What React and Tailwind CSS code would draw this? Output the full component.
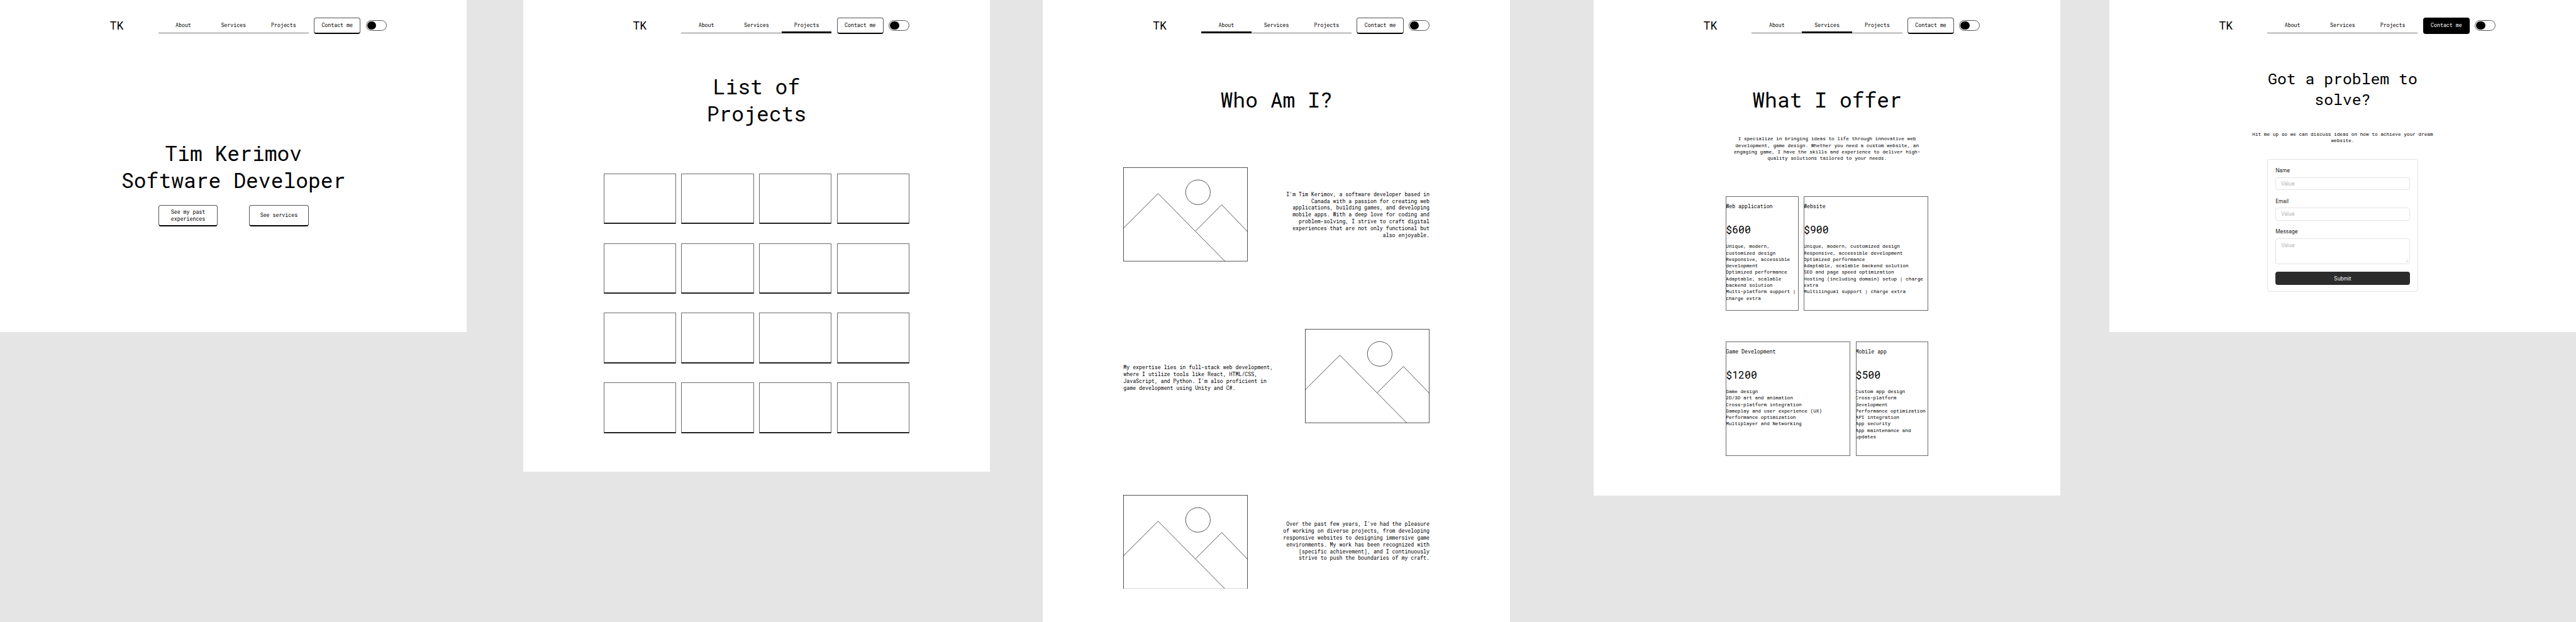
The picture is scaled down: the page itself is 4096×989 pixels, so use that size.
import React from "react";

const NAV = ["About", "Services", "Projects"];

function Header({ active }) {
  const contact = active === "Contact";
  return (
    <header className="flex h-50 w-944 items-center">
      <div className="w-224 text-center text-[18.56px] leading-[24.5px]">TK</div>
      <nav className="ml-16 flex h-50 w-464 items-start">
        {NAV.map((item) => (
          <a
            key={item}
            className={
              "flex h-48.5 w-1/3 items-center justify-center text-[8.25px] leading-[10.88px] " +
              (active === item ? "border-b-3 border-black pt-[3px]" : "border-b border-[#777] pt-[1px]")
            }
          >
            {item}
          </a>
        ))}
      </nav>
      <button
        className={
          "ml-16 flex h-50 w-144 items-center justify-center rounded-[4px] text-[8.25px] leading-[10.88px] " +
          (contact ? "bg-black text-white" : "border border-b-2 border-[#555] border-b-black pt-[1px]")
        }
      >
        Contact me
      </button>
      <div className="ml-16 flex h-33 w-64 items-center rounded-full border border-[#555] px-[1px]">
        <span className="h-26 w-28 rounded-full bg-black" />
      </div>
    </header>
  );
}

function Frame({ active, className, children }) {
  return (
    <section className={"flex w-1440 shrink-0 flex-col items-center bg-white pt-54 " + className}>
      <Header active={active} />
      {children}
    </section>
  );
}

function Title({ className, children }) {
  return (
    <h1 className={"whitespace-pre text-center text-[33px] leading-[43.5px] " + className}>{children}</h1>
  );
}

function HomeButton({ children }) {
  return (
    <button className="flex h-66.5 w-184 items-center justify-center whitespace-pre rounded-[4px] border border-b-2 border-[#555] border-b-black pt-[1px] text-center text-[8.25px] leading-[10.88px]">
      {children}
    </button>
  );
}

function Picture() {
  return (
    <svg viewBox="0 0 384 290" className="h-290 w-384 shrink-0" fill="none" stroke="#000" strokeWidth="1.3">
      <rect x="0.65" y="0.65" width="382.7" height="288.7" />
      <circle cx="230.5" cy="77" r="38" />
      <path d="M0 188.5 L107.6 81 L314 290" />
      <path d="M223 196.6 L303.7 115.7 L384 199" />
    </svg>
  );
}

function Story({ className, children }) {
  return <p className={"flex-1 whitespace-pre text-[8.25px] leading-[10.88px] " + className}>{children}</p>;
}

const OFFERS = [
  [
    {
      name: "Web application",
      price: "$600",
      width: "w-224",
      items:
        "Unique, modern,\ncustomized design\nResponsive, accessible\ndevelopment\nOptimized performance\nAdaptable, scalable\nbackend solution\nMulti-platform support |\ncharge extra",
    },
    {
      name: "Website",
      price: "$900",
      width: "w-384",
      items:
        "Unique, modern, customized design\nResponsive, accessible development\nOptimized performance\nAdaptable, scalable backend solution\nSEO and page speed optimization\nHosting (including domain) setup | charge\nextra\nMultilingual support | charge extra",
    },
  ],
  [
    {
      name: "Game Development",
      price: "$1200",
      width: "w-384",
      items:
        "Game design\n2D/3D art and animation\nCross-platform integration\nGameplay and user experience (UX)\nPerformance optimization\nMultiplayer and Networking",
    },
    {
      name: "Mobile app",
      price: "$500",
      width: "w-224",
      items:
        "Custom app design\nCross-platform\ndevelopment\nPerformance optimization\nAPI integration\nApp security\nApp maintenance and\nupdates",
    },
  ],
];

function Offer({ name, price, width, items }) {
  return (
    <article className={"h-353.5 pt-21 outline outline-[#6a6a6a] -outline-offset-1 " + width}>
      <h2 className="text-[8.25px] leading-[10.88px]">{name}</h2>
      <div className="mt-39.75 text-[16.5px] leading-[21.76px]">{price}</div>
      <div className="mt-20 whitespace-pre text-[7.734px] leading-[10.31px]">{items}</div>
    </article>
  );
}

function Field({ label, area }) {
  return (
    <label className="flex flex-col">
      <span className="text-[8.25px] leading-[11.55px] text-[#1e1e1e]">{label}</span>
      <span
        className={
          "mt-8 flex justify-between rounded-[4px] border border-[#e4e4e4] pl-15 text-[8.25px] text-[#b3b3b3] " +
          (area ? "h-80 pt-12 leading-[8.25px]" : "h-40 items-center leading-[8.25px]")
        }
      >
        Value
        {area && (
          <svg viewBox="0 0 8 8" className="mr-4 mb-4 h-8 w-8 self-end" stroke="#999" strokeWidth="1">
            <path d="M1 7.5 L7.5 1 M4.5 7.5 L7.5 4.5" />
          </svg>
        )}
      </span>
    </label>
  );
}

export default function App() {
  return (
    <main className="flex h-[989px] w-[4096px] items-start overflow-hidden bg-[#e5e5e5] font-['Roboto_Mono','DejaVu_Sans_Mono',monospace] text-black [--spacing:0.51561px]">
      <Frame active="" className="h-1024">
        <Title className="mt-326">{"Tim Kerimov\nSoftware Developer"}</Title>
        <div className="mt-33 flex gap-96">
          <HomeButton>{"See my past\nexperiences"}</HomeButton>
          <HomeButton>See services</HomeButton>
        </div>
      </Frame>

      <Frame active="Projects" className="ml-173 h-1455">
        <Title className="mt-120.5">{"List of\nProjects"}</Title>
        <div className="mt-141.5 grid grid-cols-4 gap-x-16 gap-y-59">
          {Array.from({ length: 16 }, (_, i) => (
            <div key={i} className="h-156 w-224 rounded-[1px] border border-b-2 border-[#6a6a6a] border-b-[#222]" />
          ))}
        </div>
      </Frame>

      <Frame active="About" className="ml-163.5 h-1919">
        <Title className="mt-162.25">Who Am I?</Title>
        <div className="mt-165.5 flex h-290 w-944">
          <Picture />
          <Story className="pt-73 text-right">
            {
              "I'm Tim Kerimov, a software developer based in\nCanada with a passion for creating web\napplications, building games, and developing\nmobile apps. With a deep love for coding and\nproblem-solving, I strive to craft digital\nexperiences that are not only functional but\nalso enjoyable."
            }
          </Story>
        </div>
        <div className="mt-209 flex h-290 w-944">
          <Story className="pt-108">
            {
              "My expertise lies in full-stack web development,\nwhere I utilize tools like React, HTML/CSS,\nJavaScript, and Python. I'm also proficient in\ngame development using Unity and C#."
            }
          </Story>
          <Picture />
        </div>
        <div className="mt-221 flex h-290 w-944">
          <Picture />
          <Story className="pt-80 text-right">
            {
              "Over the past few years, I've had the pleasure\nof working on diverse projects, from developing\nresponsive websites to designing immersive game\nenvironments. My work has been recognized with\n[specific achievement], and I continuously\nstrive to push the boundaries of my craft."
            }
          </Story>
        </div>
      </Frame>

      <Frame active="Services" className="ml-258 h-1528">
        <Title className="mt-162.25">What I offer</Title>
        <p className="mt-67.25 whitespace-pre text-center text-[7.734px] leading-[10.31px]">
          {
            "I specialize in bringing ideas to life through innovative web\ndevelopment, game design. Whether you need a custom website, an\nengaging game, I have the skills and experience to deliver high-\nquality solutions tailored to your needs."
          }
        </p>
        <div className="mt-107.25 flex flex-col gap-94">
          {OFFERS.map((row, i) => (
            <div key={i} className="flex gap-16">
              {row.map((offer) => (
                <Offer key={offer.name} {...offer} />
              ))}
            </div>
          ))}
        </div>
      </Frame>

      <Frame active="Contact" className="ml-150 h-1024">
        <h1 className="mt-107.25 whitespace-pre text-center text-[24.75px] leading-[32.64px]">
          {"Got a problem to\nsolve?"}
        </h1>
        <p className="mt-65 whitespace-pre text-center text-[7.734px] leading-[10.31px]">
          {"Hit me up so we can discuss ideas on how to achieve your dream\nwebsite."}
        </p>
        <form className="mt-48 flex h-410 w-464 flex-col gap-24 rounded-[4px] border border-[#e4e4e4] px-23 pt-23 font-['Inter',sans-serif]">
          <Field label="Name" />
          <Field label="Email" />
          <Field label="Message" area />
          <button
            type="button"
            className="flex h-40 items-center justify-center rounded-[4px] bg-[#2c2c2c] text-[8.25px] leading-[8.25px] text-[#f5f5f5]"
          >
            Submit
          </button>
        </form>
      </Frame>
    </main>
  );
}
